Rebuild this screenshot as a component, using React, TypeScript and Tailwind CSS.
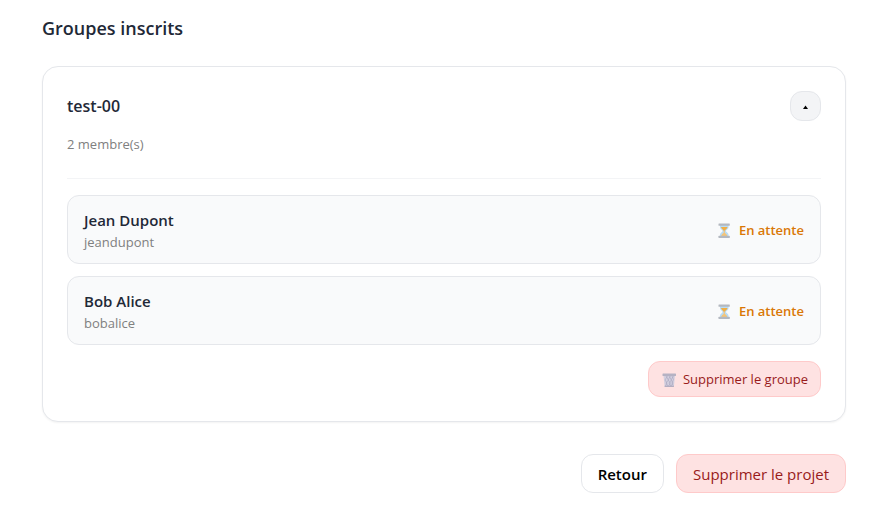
import React from "react";

interface Member {
  name: string;
  login: string;
}

const members: Member[] = [
  { name: "Jean Dupont", login: "jeandupont" },
  { name: "Bob Alice", login: "bobalice" },
];

const HourglassIcon: React.FC = () => (
  <svg viewBox="0 0 14 16" className="h-4 w-3.5" aria-hidden="true">
    <path d="M3 2h8.500v2.500c0 1.500-2.600 2.400-2.600 3.500s2.600 2 2.600 3.500V14H3v-2.500C3 10 5.600 9.100 5.600 8S3 6 3 4.500z" fill="#b9dcf5" />
    <path d="M4 4h6.500c0 1.700-2.200 2.400-2.500 3.800H6.500C6.200 6.400 4 5.700 4 4z" fill="#f0ae45" />
    <path d="M6.700 7.500h1.100v2.500c1.300.6 2.200 1.500 2.500 3H4.200c.3-1.500 1.200-2.400 2.500-3z" fill="#f5c477" />
    <rect x="1.500" y="0.500" width="11.300" height="2.200" rx=".5" fill="#b3b8c0" />
    <rect x="1.500" y="12.800" width="11.300" height="2.200" rx=".5" fill="#b3b8c0" />
  </svg>
);

const BinIcon: React.FC = () => (
  <svg viewBox="0 0 16 16" className="size-4" aria-hidden="true">
    <path d="M2.500 3.500h11.500L12.900 14.500H3.600z" fill="#d3d0df" />
    <path d="M5 4l2.500 4L5 11l2 3M8 4l2.500 4L8 11l2 3M11 4l1.500 3.500L11 11l1 2.500M6.500 4L4 8l2 3-1.500 3M9.500 4L7 8l2.500 3L7.500 14M12.500 4L10 8l2 3-2 3" stroke="#aaa6c0" strokeWidth=".6" fill="none" />
    <rect x="1.500" y="1.500" width="13.500" height="2.500" rx=".6" fill="#b5b2c3" />
    <path d="M3.600 14.300h9.300" stroke="#a5a2b8" />
  </svg>
);

const MemberRow: React.FC<{ member: Member }> = ({ member }) => (
  <li className="flex items-center justify-between rounded-xl border border-gray-200 bg-[#f9fafb] px-4 py-[11px]">
    <div>
      <p className="text-[15px] leading-[26px] font-semibold text-[#1f2937]">{member.name}</p>
      <p className="text-[13px] leading-[19px] text-[#808080]">{member.login}</p>
    </div>
    <span className="flex items-center gap-2 pt-0.5 text-[13px] font-semibold text-[#d97706]">
      <HourglassIcon />
      En attente
    </span>
  </li>
);

export default function App() {
  return (
    <main className="pt-4 pr-[35px] pb-6 pl-[42px] font-['Open_Sans','Noto_Sans',sans-serif]">
      <h2 className="text-lg leading-6 font-semibold text-[#1f2937]">Groupes inscrits</h2>

      <section className="mt-[26px] rounded-2xl border border-gray-200 bg-white p-6 shadow-xs">
        <div className="flex items-center justify-between">
          <h3 className="text-base font-semibold text-[#1f2937]">test-00</h3>
          <button
            type="button"
            aria-label="Replier le groupe"
            className="flex h-[30px] w-[31px] items-center justify-center rounded-xl border border-gray-200 bg-gray-100 pt-0.5"
          >
            <svg viewBox="0 0 6 4" className="h-1 w-1.5" aria-hidden="true">
              <path d="M2.500 0.500L5 4H0z" fill="#000" />
            </svg>
          </button>
        </div>
        <p className="mt-3 text-[13px] leading-[22px] text-[#808080]">2 membre(s)</p>

        <ul className="mt-[23px] flex flex-col gap-3 border-t border-gray-100 pt-4">
          {members.map((member) => (
            <MemberRow key={member.login} member={member} />
          ))}
        </ul>

        <div className="mt-4 flex justify-end">
          <button
            type="button"
            className="flex h-9 items-center gap-1.5 rounded-xl border border-[#fecaca] bg-[#fee2e2] px-3 pt-0.5 text-[13px] text-[#991b1b]"
          >
            <BinIcon />
            Supprimer le groupe
          </button>
        </div>
      </section>

      <div className="mt-8 flex justify-end gap-3">
        <button type="button" className="h-[39px] rounded-xl border border-gray-200 bg-white px-4 pt-0.5 text-[15px] font-semibold text-black">
          Retour
        </button>
        <button type="button" className="h-[39px] rounded-xl border border-[#fecaca] bg-[#fee2e2] px-4 pt-0.5 text-[15px] text-[#991b1b]">
          Supprimer le projet
        </button>
      </div>
    </main>
  );
}
